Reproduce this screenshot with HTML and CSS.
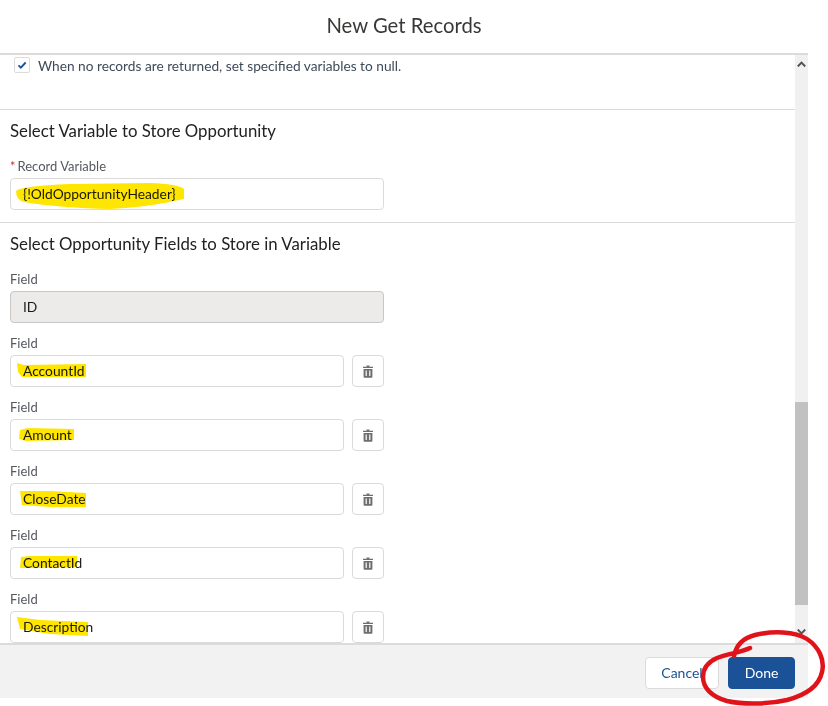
FILE: index.html
```html
<!DOCTYPE html>
<html lang="en">
<head>
<meta charset="utf-8">
<title>New Get Records</title>
<link rel="stylesheet" href="styles.css">
</head>
<body>
<svg width="0" height="0" class="defs">
  <symbol id="trash" viewBox="0 0 12 13">
    <path d="M4.6 0.5h2.8v1.2h3.6v1.4H1V1.7h3.6z"/>
    <path fill-rule="evenodd" d="M1.6 4h8.8v7.8a1 1 0 0 1-1 1H2.6a1 1 0 0 1-1-1zM3.6 5.6v5.4h1.2V5.6zM7.2 5.6v5.4h1.2V5.6z"/>
  </symbol>
</svg>
<div class="modal">
  <header class="modal-header"><h1 class="modal-title">New Get Records</h1></header>
  <div class="modal-body">
    <main class="content">
      <div class="check-row">
        <span class="checkbox">
          <svg viewBox="0 0 12 12" width="10" height="10"><path d="M1.8 6.4 4.6 9.2 10.4 3" fill="none" stroke="#1b5297" stroke-width="2.2"/></svg>
        </span>
        <span class="check-label">When no records are returned, set specified variables to null.</span>
      </div>
      <section class="section section-first">
        <h2 class="section-title">Select Variable to Store Opportunity</h2>
        <div class="field">
          <div class="field-label"><span class="req">*</span>Record Variable</div>
          <div class="input input-full">{!OldOpportunityHeader}</div>
        </div>
      </section>
      <section class="section section-fields">
        <h2 class="section-title">Select Opportunity Fields to Store in Variable</h2>
        <div class="field">
          <div class="field-label">Field</div>
          <div class="input input-full input-disabled">ID</div>
        </div>
        <div class="field">
          <div class="field-label">Field</div>
          <div class="field-row">
            <div class="input">AccountId</div>
            <button class="icon-btn"><svg class="trash"><use href="#trash"/></svg></button>
          </div>
        </div>
        <div class="field">
          <div class="field-label">Field</div>
          <div class="field-row">
            <div class="input">Amount</div>
            <button class="icon-btn"><svg class="trash"><use href="#trash"/></svg></button>
          </div>
        </div>
        <div class="field">
          <div class="field-label">Field</div>
          <div class="field-row">
            <div class="input">CloseDate</div>
            <button class="icon-btn"><svg class="trash"><use href="#trash"/></svg></button>
          </div>
        </div>
        <div class="field">
          <div class="field-label">Field</div>
          <div class="field-row">
            <div class="input">ContactId</div>
            <button class="icon-btn"><svg class="trash"><use href="#trash"/></svg></button>
          </div>
        </div>
        <div class="field">
          <div class="field-label">Field</div>
          <div class="field-row">
            <div class="input">Description</div>
            <button class="icon-btn"><svg class="trash"><use href="#trash"/></svg></button>
          </div>
        </div>
      </section>
    </main>
    <div class="scrollbar">
      <svg class="arrow" viewBox="0 0 9 6" width="9" height="6"><path d="M0.8 5.4 4.5 1.6 8.2 5.4" fill="none" stroke="#505050" stroke-width="2"/></svg>
      <div class="track"><div class="thumb"></div></div>
      <svg class="arrow" viewBox="0 0 9 6" width="9" height="6"><path d="M0.8 0.6 4.5 4.4 8.2 0.6" fill="none" stroke="#505050" stroke-width="2"/></svg>
    </div>
  </div>
  <footer class="modal-footer">
    <button class="btn btn-neutral">Cancel</button>
    <button class="btn btn-brand">Done</button>
  </footer>
</div>
<svg class="marker" viewBox="0 0 828 706" width="828" height="706">
  <g fill="#ffe600">
    <path d="M16 191Q20 186 70 184L150 183Q178 184 184 189L184 199Q150 207 110 209Q60 208 24 202Q16 200 16 191Z"/>
    <path d="M17 363L24 365L86 364L86 377L22 377L18 372Z"/>
    <path d="M20 430L28 428L74 429L74 440L26 441L19 439Z"/>
    <path d="M20 491L50 491L86 493L86 507L50 507L22 505Z"/>
    <path d="M21 557L30 556L77 556L77 567L40 568L20 568Z"/>
    <path d="M17 617L40 620L88 622L88 636L50 634L20 629Z"/>
  </g>
</svg>
<svg class="annotation" viewBox="0 0 828 706" width="828" height="706">
  <path d="M734 656C736 646 743 638 755 635C772 631 795 631 807 639C819 647 825 660 822 672C819 686 806 695 787 700C770 704 745 705 727 701C712 697 703 688 703 677C703 668 708 662 717 658C727 654 742 652 750 648" fill="none" stroke="#e0131b" stroke-width="4.5" stroke-linecap="round"/>
</svg>
</body>
</html>
```
FILE: styles.css
```css
* { box-sizing: border-box; }
html, body { margin: 0; padding: 0; background: #fff; }
body {
  position: relative;
  width: 828px;
  height: 706px;
  overflow: hidden;
  font-family: Lato, "Open Sans", sans-serif;
  font-size: 14px;
  color: #3e3e3c;
}
.defs { position: absolute; }
.modal { width: 808px; height: 698px; display: flex; flex-direction: column; }
.modal-header {
  height: 55px;
  flex: none;
  border-bottom: 2px solid #dddbda;
  display: flex;
  align-items: center;
  justify-content: center;
}
.modal-title { margin: 0 0 4px; font-size: 20.3px; font-weight: 400; color: #3a3836; }
.modal-body { flex: 1; min-height: 0; display: flex; }
.content { flex: 1; min-width: 0; overflow: hidden; }
.check-row { display: flex; align-items: center; gap: 8px; height: 54px; padding: 2px 0 36px 14px; }
.checkbox {
  width: 16px; height: 16px;
  border: 1px solid #dddbda;
  border-radius: 2px;
  display: flex; align-items: center; justify-content: center;
  flex: none;
}
.check-label { font-size: 13.7px; color: #3e4a59; white-space: nowrap; }
.section { border-top: 1px solid #dddbda; padding: 0 10px; }
.section-first { height: 113px; }
.section-title { margin: 0 0 18px; font-size: 16.8px; font-weight: 400; color: #222; line-height: 20px; padding-top: 11px; height: 31px; }
.field { height: 51px; margin-bottom: 13px; width: 374px; }
.field-label { font-size: 13px; line-height: 14px; height: 14px; margin-bottom: 5px; color: #54585f; white-space: nowrap; }
.req { color: #c23934; margin-right: 2px; }
.field-row { display: flex; gap: 8px; }
.input {
  height: 32px;
  flex: 1;
  border: 1px solid #dddbda;
  border-radius: 4px;
  background: #fff;
  padding: 0 12px 2px;
  display: flex;
  align-items: center;
  font-size: 13.8px;
  color: #1a1a1a;
}
.input-full { width: 374px; }
.input-disabled { background: #ecebea; border-color: #c9c7c5; }
.icon-btn {
  width: 32px; height: 32px;
  padding: 0;
  flex: none;
  background: #fff;
  border: 1px solid #dddbda;
  border-radius: 4px;
  display: flex; align-items: center; justify-content: center;
}
.trash { width: 12px; height: 13px; fill: #706e6b; }
.scrollbar {
  width: 13px; flex: none;
  background: #f0f0f0;
  display: flex; flex-direction: column; align-items: center;
  padding-top: 6px;
}
.arrow { flex: none; }
.track { flex: 1; width: 13px; padding-top: 335px; }
.thumb { width: 13px; height: 203px; background: #c1c1c1; }
.scrollbar .arrow:last-child { margin-bottom: 8px; }
.modal-footer {
  height: 55px; flex: none;
  background: #f3f2f2;
  border-top: 2px solid #dddbda;
  display: flex; align-items: center; justify-content: flex-end;
  gap: 9px;
  padding: 3px 13px 0 0;
}
.btn { height: 32px; border-radius: 4px; font-family: inherit; font-size: 14px; padding: 0 0 2px; }
.btn-neutral { width: 74px; background: #fff; border: 1px solid #dddbda; color: #1b5297; }
.btn-brand { width: 67px; background: #1b5297; border: 1px solid #1b5297; color: #fff; }
.marker { position: absolute; left: 0; top: 0; mix-blend-mode: multiply; pointer-events: none; }
.annotation { position: absolute; left: 0; top: 0; pointer-events: none; }
```
